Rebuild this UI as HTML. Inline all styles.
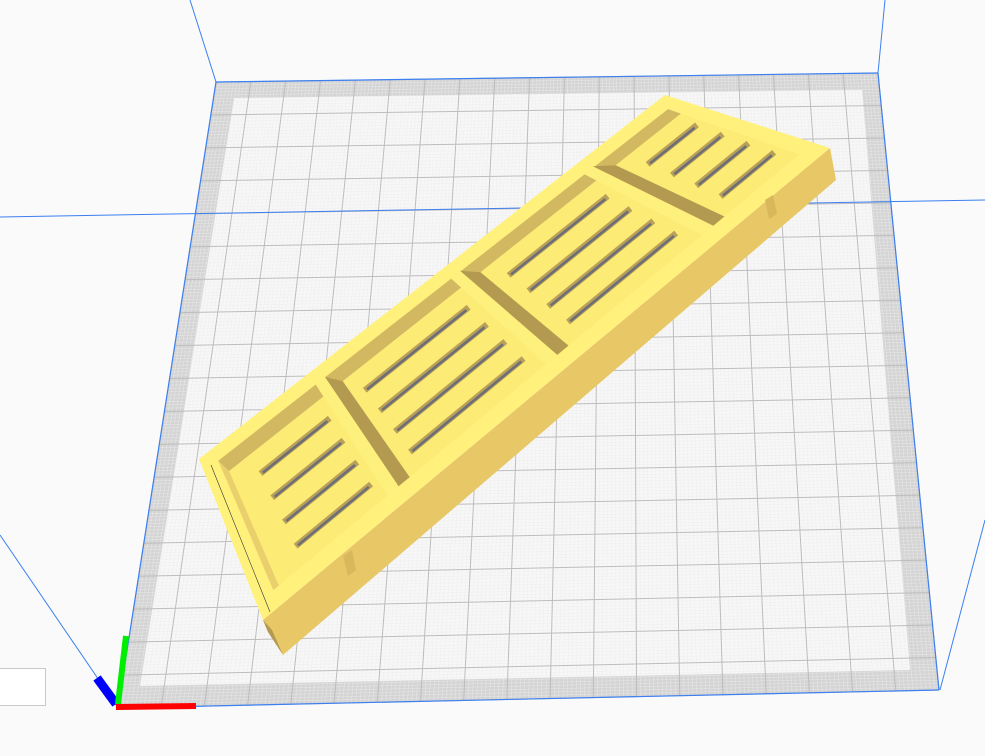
<!DOCTYPE html>
<html><head><meta charset="utf-8"><style>
html,body{margin:0;padding:0;background:#fafafa;width:985px;height:756px;overflow:hidden}
svg{position:absolute;left:0;top:0}
#box{position:absolute;left:-2px;top:668px;width:46px;height:36px;background:#fff;border:1px solid #c8c8c8}
</style></head><body>
<svg id="s" width="985" height="756" viewBox="0 0 985 756" xmlns="http://www.w3.org/2000/svg"></svg>
<div id="box"></div>
<script>
const s=document.getElementById('s');let h='';
function bl(q,u,v){const[a,b,c,d]=q;return[a[0]*(1-u)*(1-v)+b[0]*u*(1-v)+c[0]*u*v+d[0]*(1-u)*v,a[1]*(1-u)*(1-v)+b[1]*u*(1-v)+c[1]*u*v+d[1]*(1-u)*v];}
function poly(pts,f,extra){h+=`<polygon points="${pts.map(p=>p[0].toFixed(1)+','+p[1].toFixed(1)).join(' ')}" fill="${f}" ${extra||''}/>`;}
function line(p,q,c,w){h+=`<line x1="${p[0]}" y1="${p[1]}" x2="${q[0]}" y2="${q[1]}" stroke="${c}" stroke-width="${w}"/>`;}
const P=[[216,82],[878,73],[939,690],[118,708]];
poly(P,'#d4d4d4');
poly([[234,98],[862,90],[910,670],[140,686]],'#f7f7f7');
for(let i=0;i<=190;i++){let t=i/190;line(bl(P,t,0),bl(P,t,1),'#ececec',0.4);line(bl(P,0,t),bl(P,1,t),'#ececec',0.4);}
for(let i=0;i<=19;i++){let t=i/19;line(bl(P,t,0),bl(P,t,1),'#bdbdbd',1);line(bl(P,0,t),bl(P,1,t),'#bdbdbd',1);}
line([190,0],[216,82],'#3b7ff0',1);line([885,0],[878,73],'#3b7ff0',1);
line([0,217],[985,200],'#3b7ff0',1);line([0,535],[118,708],'#3b7ff0',1);
line([985,520],[940,690],'#3b7ff0',1);
line([216,82],[878,73],'#3b7ff0',1.2);line([878,73],[939,690],'#3b7ff0',1.2);
line([216,82],[118,708],'#3b7ff0',1.2);line([118,708],[939,690],'#3b7ff0',1.2);
const O=[[199,459],[665,95],[830,148],[263,620]];
poly([[263,620],[830,148],[836,180],[283,655],[268,632]],'#e7c766');
poly([[263,620],[268,632],[283,655],[272,630]],'#b49a50');
poly(O,'#fff17c');
poly([bl(O,0.03,0.08),bl(O,0.975,0.09),bl(O,0.975,0.17),bl(O,0.03,0.17)],'#d3b862');
poly([bl(O,0.03,0.08),bl(O,0.04,0.17),bl(O,0.04,0.9),bl(O,0.03,0.9)],'#e9d06c');
poly([bl(O,0.04,0.17),bl(O,0.975,0.17),bl(O,0.975,0.9),bl(O,0.04,0.9)],'#fcec76');
[0.235,0.52,0.8].forEach(u=>{
poly([bl(O,u,0.08),bl(O,u+0.02,0.08),bl(O,u+0.02,0.9),bl(O,u,0.9)],'#fdf07c');
poly([bl(O,u+0.02,0.08),bl(O,u+0.04,0.17),bl(O,u+0.04,0.9),bl(O,u+0.02,0.9)],'#b39a50');
});
[[0.08,0.22],[0.29,0.5],[0.58,0.78],[0.86,0.96]].forEach(([a,b])=>{
[0.3,0.46,0.62,0.78].forEach(v=>{
let p=bl(O,a+0.01,v),q=bl(O,b,v);
h+=`<line x1="${p[0]}" y1="${p[1]}" x2="${q[0]}" y2="${q[1]}" stroke="#b8a058" stroke-width="6" stroke-linecap="square"/>`;
h+=`<line x1="${p[0]}" y1="${p[1]+1}" x2="${q[0]}" y2="${q[1]+1}" stroke="#6b6e78" stroke-width="2.5"/>`;
});});
line([211,465],[270,612],'#333',0.6);
poly([[343,556],[352,550],[356,570],[348,576]],'#d8b85a');
poly([[765,200],[773,195],[777,214],[769,219]],'#d8b85a');
h+='<line x1="97" y1="678" x2="116" y2="704" stroke="#0000ff" stroke-width="9"/>';
h+='<line x1="126" y1="636" x2="118" y2="704" stroke="#00ee00" stroke-width="6"/>';
h+='<line x1="116" y1="707" x2="196" y2="706" stroke="#ff0000" stroke-width="6"/>';
s.innerHTML=h;
</script>
</body></html>
